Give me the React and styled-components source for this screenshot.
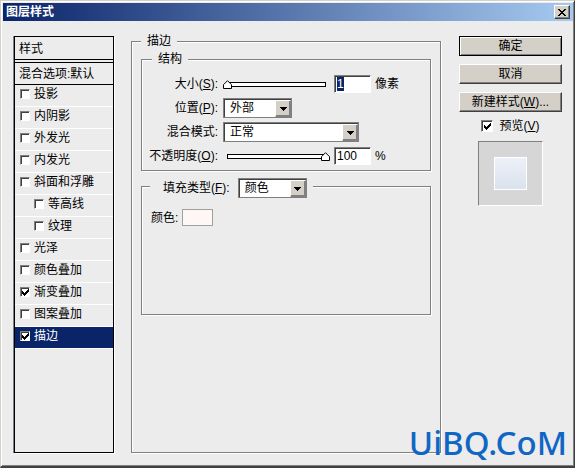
import { useState } from 'react';
import styled, { createGlobalStyle, css } from 'styled-components';

const Color = {
  face: '#ececec',
  button: '#d4d0c8',
  shadow: '#808080',
  dark: '#404040',
  white: '#ffffff',
  black: '#000000',
  selected: '#0a246a',
  watermark: '#0f66c4',
}

const tick = `url("data:image/svg+xml,%3Csvg xmlns='http://www.w3.org/2000/svg' viewBox='0 0 7 7' shape-rendering='crispEdges'%3E%3Cpath d='M0 2h1v1h1v1h1v-1h1v-1h1v-1h1v-1h1v3h-1v1h-1v1h-1v1h-1v1h-1v-1h-1v-1h-1z'/%3E%3C/svg%3E")`

const thumb = `url("data:image/svg+xml,%3Csvg xmlns='http://www.w3.org/2000/svg' viewBox='0 0 9 9'%3E%3Cpath d='M4.5 .7L8.5 4.7V8.5H.5V4.7Z' fill='white' stroke='black'/%3E%3C/svg%3E")`

const GlobalStyle = createGlobalStyle`
  * {
    box-sizing: border-box;
  }

  body {
    margin: 0;
    background: ${Color.face};
  }

  body, input, select, button {
    font-family: "Liberation Sans", "Noto Sans CJK SC", sans-serif;
    font-size: 12px;
    line-height: 16px;
    color: ${Color.black};
  }
`

const raised = css`
  border: 1px solid;
  border-color: ${Color.white} ${Color.dark} ${Color.dark} ${Color.white};
  box-shadow: inset -1px -1px 0 ${Color.shadow};
  background: ${Color.button};
`

const sunken = css`
  border: 1px solid;
  border-color: ${Color.shadow} ${Color.white} ${Color.white} ${Color.shadow};
  box-shadow: inset 1px 1px 0 ${Color.dark};
  background-color: ${Color.white};
`

const Window = styled.main`
  position: relative;
  display: flex;
  flex-direction: column;
  min-height: 100vh;
  padding: 2px 1px 1px 2px;
  border: 1px solid;
  border-color: ${Color.button} ${Color.dark} ${Color.dark} ${Color.button};
  border-bottom-width: 2px;
  box-shadow: inset 1px 1px 0 ${Color.white}, inset -1px -1px 0 ${Color.shadow};
  background: ${Color.face};
`

const TitleBar = styled.header`
  display: flex;
  align-items: center;
  justify-content: space-between;
  height: 18px;
  padding: 0 3px;
  background: linear-gradient(to right, ${Color.selected}, #a6caf0);
`

const Title = styled.h1`
  margin: 0;
  font-size: 12px;
  line-height: 16px;
  color: ${Color.white};
`

const CloseButton = styled.button`
  ${raised}
  display: flex;
  align-items: center;
  justify-content: center;
  width: 16px;
  height: 14px;
  padding: 0;
`

const Body = styled.div`
  display: flex;
  flex: 1;
  padding: 15px 11px 12px 11px;
`

const StyleList = styled.section`
  flex: none;
  width: 100px;
  margin-right: 17px;
  border: 1px solid ${Color.black};
  box-shadow: -1px 0 0 ${Color.shadow}, 1px 1px 0 ${Color.white};
`

const ListTitle = styled.h2`
  margin: 0 0 2px;
  padding: 4px 4px 2px;
  border-bottom: 1px solid ${Color.black};
  font-size: 12px;
  font-weight: normal;
  line-height: 16px;
`

const BlendOptions = styled.div`
  padding: 3px 4px 2px;
  border: solid ${Color.black};
  border-width: 1px 0;
`

const StyleRow = styled.label`
  display: flex;
  align-items: center;
  gap: 4px;
  height: 22px;
  padding: 0 0 3px ${props => props.$nested ? 19 : 5}px;
  border-bottom: 1px solid ${Color.white};
  background: ${props => props.$active ? Color.selected : 'transparent'};
  color: ${props => props.$active ? Color.white : Color.black};
`

const Checkbox = styled.input.attrs({ type: 'checkbox' })`
  ${sunken}
  appearance: none;
  flex: none;
  width: ${props => props.$size}px;
  height: ${props => props.$size}px;
  margin: 0;

  &:checked {
    background-image: ${tick};
    background-size: 7px 7px;
    background-position: center;
    background-repeat: no-repeat;
  }
`

const Group = styled.fieldset`
  min-width: 0;
  margin: 0;
  padding: 0;
  border: 1px solid ${Color.shadow};
  box-shadow: inset 1px 1px 0 ${Color.white}, 1px 1px 0 ${Color.white};
`

const Legend = styled.legend`
  margin-left: 10px;
  padding: 0 6px;
  line-height: 10px;
  background: ${Color.face};
`

const PanelLegend = styled(Legend)`
  margin-left: 0;
`

const FillLegend = styled.legend`
  display: flex;
  align-items: flex-start;
  gap: 8px;
  height: 16px;
  margin-left: 8px;
  padding: 0 6px 0 13px;
  background: ${Color.face};
`

const LegendLabel = styled.label`
  line-height: 20px;
`

const Panel = styled(Group)`
  flex: 1;
  padding: 0 9px;
`

const Structure = styled(Group)`
  margin: 8px 0 7px;
  padding-bottom: 2px;
`

const Fill = styled(Group)`
  min-height: 137px;
`

const Fields = styled.div`
  display: grid;
  grid-template-columns: 76px 1fr;
  grid-auto-rows: 24px;
  align-items: center;
  column-gap: 5px;
  margin-top: 8px;
`

const FieldLabel = styled.label`
  text-align: right;
  white-space: nowrap;
`

const Control = styled.div`
  display: flex;
  align-items: center;
  gap: 4px;
`

const Slider = styled.input.attrs({ type: 'range' })`
  appearance: none;
  width: 107px;
  height: 9px;
  margin: 0;
  background: none;

  &::-webkit-slider-runnable-track {
    height: 9px;
    background:
      linear-gradient(${Color.white}, ${Color.white}) center / calc(100% - 10px) 3px no-repeat,
      linear-gradient(${Color.black}, ${Color.black}) center / calc(100% - 8px) 5px no-repeat;
  }

  &::-webkit-slider-thumb {
    appearance: none;
    width: 9px;
    height: 9px;
    background: ${thumb};
  }
`

const NumberBox = styled.input.attrs({ type: 'text' })`
  ${sunken}
  width: 37px;
  height: 18px;
  padding: 0 2px;
  outline: none;

  &::selection {
    background: ${Color.selected};
    color: ${Color.white};
  }
`

const SelectBox = styled.div`
  ${sunken}
  display: grid;
  position: relative;
  width: ${props => props.$width}px;
  height: 20px;
  border-color: ${Color.shadow};
`

const Select = styled.select`
  appearance: none;
  padding: 0 18px 0 6px;
  border: none;
  background: none;
  outline: none;
`

const Arrow = styled.span`
  ${raised}
  display: flex;
  align-items: center;
  justify-content: center;
  position: absolute;
  top: 1px;
  right: 0;
  bottom: 0;
  width: 16px;
  border-color: ${Color.white} ${Color.shadow} ${Color.shadow} ${Color.white};
  pointer-events: none;
`

const SwatchRow = styled.div`
  display: flex;
  align-items: center;
  gap: 4px;
  padding: 15px 9px;
`

const Swatch = styled.button`
  width: 31px;
  height: 17px;
  padding: 0;
  border: 1px solid #a0a0a0;
  background: #fff6f6;
`

const Actions = styled.aside`
  display: flex;
  flex: none;
  flex-direction: column;
  gap: 8px;
  width: 103px;
  margin-left: 18px;
`

const ActionButton = styled.button`
  ${raised}
  height: 20px;
  padding: 0;
  ${props => props.$primary && css`
    border-color: ${Color.black};
    box-shadow: inset 1px 1px 0 ${Color.white}, inset -1px -1px 0 ${Color.shadow};
  `}
`

const PreviewToggle = styled.label`
  display: flex;
  align-items: center;
  justify-content: center;
  gap: 6px;
  padding-bottom: 1px;
  line-height: 10px;
`

const Preview = styled.div`
  display: flex;
  align-items: center;
  justify-content: center;
  align-self: center;
  width: 65px;
  height: 65px;
  border: 1px solid;
  border-color: ${Color.shadow} ${Color.white} ${Color.white} ${Color.shadow};
  background: #d6d6d6;
`

const PreviewShape = styled.div`
  width: 33px;
  height: 33px;
  border: 1px solid ${Color.white};
  background: linear-gradient(#edf1f8, #dae2ee);
`

const Watermark = styled.div`
  position: absolute;
  right: 7px;
  bottom: 2px;
  font-family: "Noto Sans", sans-serif;
  font-size: 33px;
  font-weight: 500;
  line-height: 42px;
  color: ${Color.watermark};
`

const styleList = [
  { name: '投影' },
  { name: '内阴影' },
  { name: '外发光' },
  { name: '内发光' },
  { name: '斜面和浮雕' },
  { name: '等高线', nested: true },
  { name: '纹理', nested: true },
  { name: '光泽' },
  { name: '颜色叠加' },
  { name: '渐变叠加', checked: true },
  { name: '图案叠加' },
  { name: '描边', checked: true, active: true },
]

const DropDown = ({ id, width, options }) => {
  return (
    <SelectBox $width={width}>
      <Select id={id}>
        {options.map(option => <option key={option}>{option}</option>)}
      </Select>
      <Arrow>
        <svg width="7" height="4" shapeRendering="crispEdges">
          <path d="M0 0h7v1h-1v1h-1v1h-1v1h-1v-1h-1v-1h-1v-1h-1z" />
        </svg>
      </Arrow>
    </SelectBox>
  )
}

const selectOnFocus = (e) => e.target.select()

function App() {
  const [size, setSize] = useState('1')
  const [opacity, setOpacity] = useState('100')

  return (
    <>
      <GlobalStyle />
      <Window>
        <TitleBar>
          <Title>图层样式</Title>
          <CloseButton aria-label="关闭">
            <svg width="8" height="7" shapeRendering="crispEdges">
              <path d="M0 0h2v1h1v1h2v-1h1v-1h2v1h-1v1h-1v1h-1v1h1v1h1v1h1v1h-2v-1h-1v-1h-2v1h-1v1h-2v-1h1v-1h1v-1h1v-1h-1v-1h-1v-1h-1z" />
            </svg>
          </CloseButton>
        </TitleBar>
        <Body>
          <StyleList>
            <ListTitle>样式</ListTitle>
            <BlendOptions>混合选项:默认</BlendOptions>
            {
              styleList.map(item => (
                <StyleRow key={item.name} $nested={item.nested} $active={item.active}>
                  <Checkbox $size={10} defaultChecked={item.checked} />
                  {item.name}
                </StyleRow>
              ))
            }
          </StyleList>
          <Panel>
            <PanelLegend>描边</PanelLegend>
            <Structure>
              <Legend>结构</Legend>
              <Fields>
                <FieldLabel htmlFor="size">大小(<u>S</u>):</FieldLabel>
                <Control>
                  <Slider aria-label="大小" min="1" max="250" value={size} onChange={e => setSize(e.target.value)} />
                  <NumberBox id="size" value={size} autoFocus onFocus={selectOnFocus} onChange={e => setSize(e.target.value)} />
                  像素
                </Control>
                <FieldLabel htmlFor="position">位置(<u>P</u>):</FieldLabel>
                <DropDown id="position" width={69} options={['外部', '内部', '居中']} />
                <FieldLabel htmlFor="mode">混合模式:</FieldLabel>
                <DropDown id="mode" width={136} options={['正常', '溶解', '正片叠底']} />
                <FieldLabel htmlFor="opacity">不透明度(<u>O</u>):</FieldLabel>
                <Control>
                  <Slider aria-label="不透明度" min="0" max="100" value={opacity} onChange={e => setOpacity(e.target.value)} />
                  <NumberBox id="opacity" value={opacity} onChange={e => setOpacity(e.target.value)} />
                  %
                </Control>
              </Fields>
            </Structure>
            <Fill>
              <FillLegend>
                <LegendLabel htmlFor="fill">填充类型(<u>F</u>):</LegendLabel>
                <DropDown id="fill" width={69} options={['颜色', '渐变', '图案']} />
              </FillLegend>
              <SwatchRow>
                <label htmlFor="color">颜色:</label>
                <Swatch id="color" />
              </SwatchRow>
            </Fill>
          </Panel>
          <Actions>
            <ActionButton $primary>确定</ActionButton>
            <ActionButton>取消</ActionButton>
            <ActionButton>新建样式(<u>W</u>)...</ActionButton>
            <PreviewToggle>
              <Checkbox $size={12} defaultChecked />
              <span>预览(<u>V</u>)</span>
            </PreviewToggle>
            <Preview>
              <PreviewShape />
            </Preview>
          </Actions>
        </Body>
        <Watermark>UiBQ.CoM</Watermark>
      </Window>
    </>
  );
}

export default App;
